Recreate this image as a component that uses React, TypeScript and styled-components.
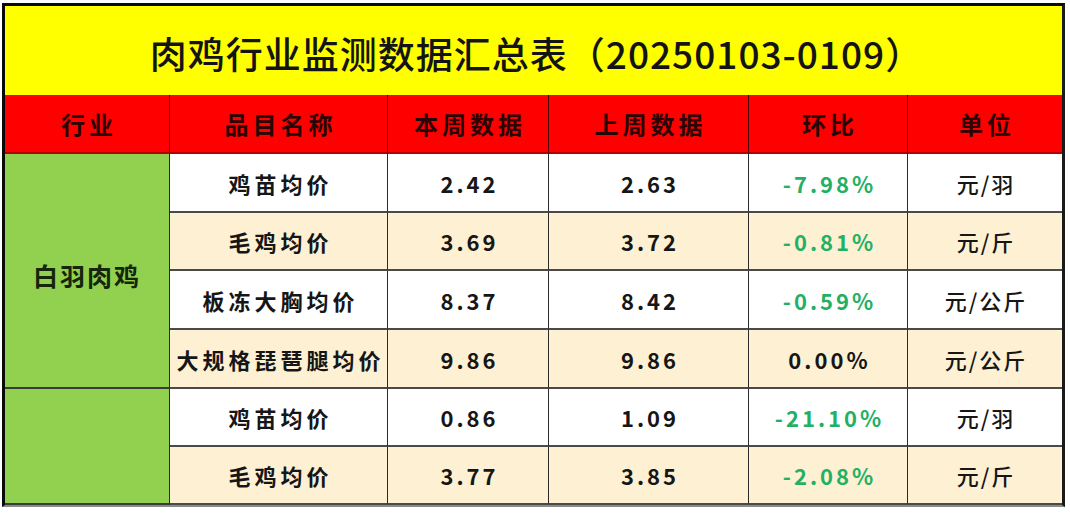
import React from "react";
import styled, { createGlobalStyle } from "styled-components";

const GlobalStyle = createGlobalStyle`
  html, body {
    margin: 0;
    padding: 0;
    background: #ffffff;
  }
  body {
    font-family: "Noto Sans CJK SC", "Noto Sans", sans-serif;
  }
`;

const Sheet = styled.div`
  margin: 3px 0 0 2px;
  width: 1057px;
  display: grid;
  grid-template-columns: 165px 218px 161px 200px 159px 154px;
  grid-template-rows: 89px 59px 59px 58px 59px 59px 58px 58px;
  border-top: 3px solid #0a0a0a;
  border-left: 3px solid #0a0a0a;
  border-right: 3px solid #1a1a1a;
  border-bottom: 2px solid #8a8a8a;
`;

const Title = styled.div`
  grid-column: 1 / -1;
  background: #ffff00;
  display: flex;
  align-items: center;
  justify-content: center;
  padding: 4px 0 0 6px;
  font-size: 37px;
  font-weight: 500;
  color: #141414;
  letter-spacing: 1px;
`;

const HeadCell = styled.div<{ $last?: boolean }>`
  background: #ff0000;
  display: flex;
  align-items: center;
  justify-content: center;
  box-sizing: border-box;
  border-right: ${(p) => (p.$last ? "none" : "1px solid #4a0000")};
  border-bottom: 2px solid #b30000;
  font-size: 24px;
  font-weight: 700;
  letter-spacing: 4px;
  color: #2a0505;
  padding-left: 4px;
`;

const GroupCell = styled.div<{ $span: number }>`
  grid-row: span ${(p) => p.$span};
  background: #92d050;
  display: flex;
  align-items: center;
  justify-content: center;
  box-sizing: border-box;
  border-right: 1px solid #2b2b2b;
  border-bottom: 2px solid #3a3a3a;
  font-size: 25px;
  font-weight: 700;
  letter-spacing: 2px;
  color: #15260a;
  padding-top: 8px;
`;

const Cell = styled.div<{ $alt?: boolean; $last?: boolean; $tone?: "green" }>`
  background: ${(p) => (p.$alt ? "#fdf0d3" : "#ffffff")};
  display: flex;
  align-items: center;
  justify-content: center;
  box-sizing: border-box;
  border-right: ${(p) => (p.$last ? "none" : "1px solid #2b2b2b")};
  border-bottom: 2px solid #4a4a4a;
  font-size: 22px;
  font-weight: 700;
  color: ${(p) => (p.$tone === "green" ? "#24b064" : "#161616")};
`;

const Name = styled.span`
  letter-spacing: 4px;
  padding-left: 4px;
`;

const Num = styled.span`
  letter-spacing: 3px;
  padding-left: 3px;
`;

const Unit = styled.span`
  letter-spacing: 2px;
  padding-left: 2px;
  font-weight: 500;
`;

type Row = {
  name: string;
  cur: string;
  prev: string;
  ratio: string;
  unit: string;
};

const groupA: Row[] = [
  { name: "鸡苗均价", cur: "2.42", prev: "2.63", ratio: "-7.98%", unit: "元/羽" },
  { name: "毛鸡均价", cur: "3.69", prev: "3.72", ratio: "-0.81%", unit: "元/斤" },
  { name: "板冻大胸均价", cur: "8.37", prev: "8.42", ratio: "-0.59%", unit: "元/公斤" },
  { name: "大规格琵琶腿均价", cur: "9.86", prev: "9.86", ratio: "0.00%", unit: "元/公斤" },
];

const groupB: Row[] = [
  { name: "鸡苗均价", cur: "0.86", prev: "1.09", ratio: "-21.10%", unit: "元/羽" },
  { name: "毛鸡均价", cur: "3.77", prev: "3.85", ratio: "-2.08%", unit: "元/斤" },
];

const headers = ["行业", "品目名称", "本周数据", "上周数据", "环比", "单位"];

const renderRow = (r: Row, alt: boolean, key: string) => (
  <React.Fragment key={key}>
    <Cell $alt={alt}>
      <Name>{r.name}</Name>
    </Cell>
    <Cell $alt={alt}>
      <Num>{r.cur}</Num>
    </Cell>
    <Cell $alt={alt}>
      <Num>{r.prev}</Num>
    </Cell>
    <Cell $alt={alt} $tone={r.ratio.startsWith("-") ? "green" : undefined}>
      <Num>{r.ratio}</Num>
    </Cell>
    <Cell $alt={alt} $last>
      <Unit>{r.unit}</Unit>
    </Cell>
  </React.Fragment>
);

const App: React.FunctionComponent = () => {
  return (
    <>
      <GlobalStyle />
      <Sheet>
        <Title>肉鸡行业监测数据汇总表（20250103-0109）</Title>
        {headers.map((h, i) => (
          <HeadCell key={h} $last={i === headers.length - 1}>
            {h}
          </HeadCell>
        ))}

        <GroupCell $span={4}>白羽肉鸡</GroupCell>
        {groupA.map((r, i) => renderRow(r, i % 2 === 1, "a" + i))}

        <GroupCell $span={2} />
        {groupB.map((r, i) => renderRow(r, i % 2 === 1, "b" + i))}
      </Sheet>
    </>
  );
};

export default App;
